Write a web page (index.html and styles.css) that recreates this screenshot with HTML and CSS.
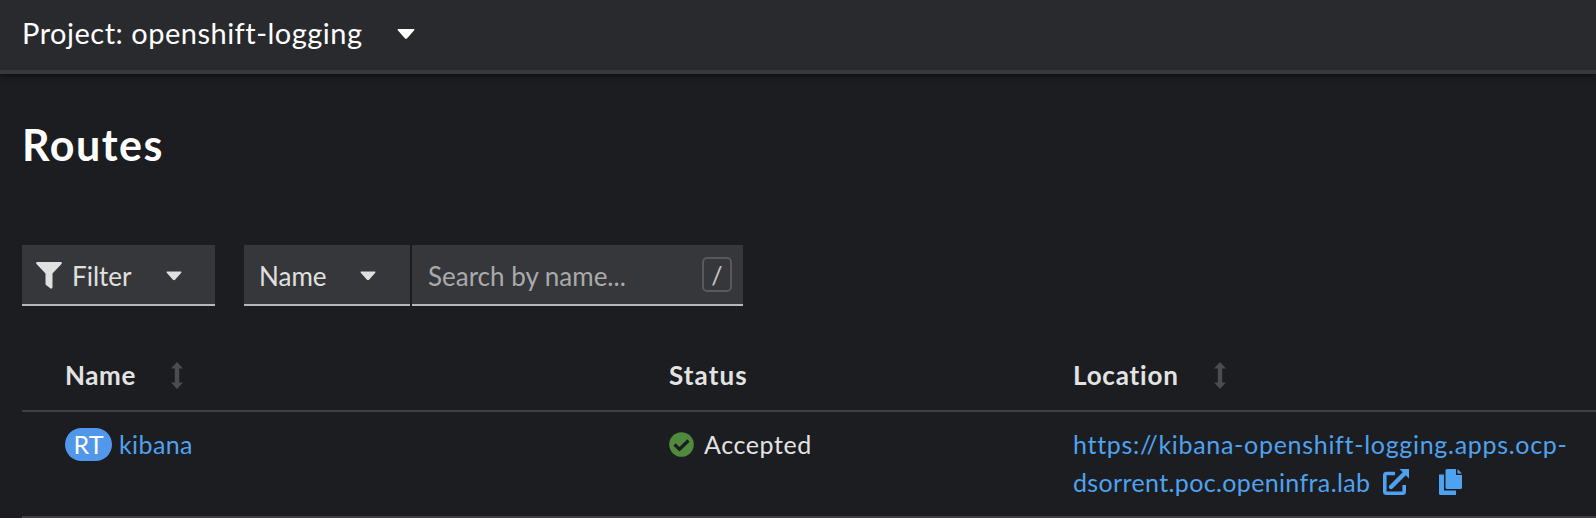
FILE: index.html
```html
<!DOCTYPE html>
<html lang="en">
<head>
<meta charset="utf-8">
<title>Routes</title>
<link rel="stylesheet" href="styles.css">
</head>
<body>
<header class="project-bar">
  <span class="project-name">Project: openshift-logging</span>
  <svg class="caret caret-lg" viewBox="0 0 18 10"><path d="M1.5 0h15q1.500 0 .7 1.300l-7 7.900q-1.200 1-2.400 0l-7-7.900q-.8-1.300.7-1.300z"/></svg>
</header>
<main class="page">
  <h1 class="title"><span>Routes</span></h1>
  <div class="toolbar">
    <button class="control filter">
      <svg class="funnel" viewBox="0 0 26 27"><path d="M1 0h24q1.500.8.500 2l-9 9.500v14q-.5 1.500-2 1l-4.500-3.500q-.5-.5-.5-1.500v-10l-9-9.500q-1-1.200.5-2z"/></svg>
      <span class="filter-text">Filter</span>
      <svg class="caret" viewBox="0 0 18 10"><path d="M1.500 0h15q1.500 0 .7 1.300l-7 7.900q-1.200 1-2.400 0l-7-7.900q-.8-1.300.7-1.300z"/></svg>
    </button>
    <button class="control kind">
      <span class="kind-text">Name</span>
      <svg class="caret" viewBox="0 0 18 10"><path d="M1.500 0h15q1.500 0 .7 1.300l-7 7.900q-1.200 1-2.400 0l-7-7.900q-.8-1.300.7-1.300z"/></svg>
    </button>
    <div class="control search">
      <span class="search-text">Search by name...</span>
      <kbd class="key">/</kbd>
    </div>
  </div>
  <div class="table">
    <div class="row head">
      <div class="cell"><span class="h-name">Name</span><svg class="sort" viewBox="0 0 12 27"><path d="M6 0l6 6.500h-3.800v14h3.800l-6 6.500-6-6.500h3.800v-14h-3.800z"/></svg></div>
      <div class="cell"><span class="h-status">Status</span></div>
      <div class="cell"><span class="h-location">Location</span><svg class="sort" viewBox="0 0 12 27"><path d="M6 0l6 6.500h-3.800v14h3.800l-6 6.500-6-6.500h3.800v-14h-3.800z"/></svg></div>
    </div>
    <div class="row body">
      <div class="cell"><span class="badge">RT</span><a class="link kibana">kibana</a></div>
      <div class="cell"><svg class="check" viewBox="0 0 25 25"><circle cx="12.500" cy="12.500" r="12.300"/><path d="M5.500 12.500l5 4.700 9-8.700"/></svg><span class="accepted">Accepted</span></div>
      <div class="cell location">
        <a class="link url1">https://kibana-openshift-logging.apps.ocp-</a>
        <div class="line2"><a class="link url2">dsorrent.poc.openinfra.lab</a>
          <svg class="external" viewBox="0 0 26 26"><path class="stroke" d="M12 4.500H3.500q-1.700 0-1.700 1.700v16.300q0 1.700 1.700 1.700H19.500q1.700 0 1.700-1.700V16"/><path class="arrow" d="M8 18L21 5"/><path class="solid" d="M16.500 0h9.500v9.500z"/></svg>
          <svg class="copy" viewBox="0 0 23 26"><path d="M0 5.500h5V21.500h12v4.500H1.500Q0 26 0 24.500z"/><path d="M6.500 1.500Q6.500 0 8 0h9v6h6v12.500q0 1.500-1.500 1.500H8q-1.500 0-1.500-1.500zM18.500 0L23 4.500h-4.500z"/></svg>
        </div>
      </div>
    </div>
  </div>
</main>
</body>
</html>
```
FILE: styles.css
```css
* { box-sizing: border-box; }
body {
  margin: 0;
  height: 518px;
  overflow: hidden;
  background: #1c1d20;
  color: #e3e3e3;
  font-family: Lato, "Open Sans", sans-serif;
  font-size: 25px;
  white-space: nowrap;
}
svg { display: block; flex: none; fill: currentColor; }
.project-bar {
  height: 74px;
  display: flex;
  align-items: center;
  padding: 0 0 2px 22px;
  background: #292a2d;
  border-bottom: 4px solid #37383a;
  box-shadow: 0 1px 6px #0b0b0d;
  color: #fff;
}
.project-name { width: 375px; padding-bottom: 3px; font-size: 29px; letter-spacing: .5px; }
.caret { width: 16px; height: 10px; }
.caret-lg { width: 18px; }
.page { padding: 47px 0 0 22px; }
.title {
  margin: 0;
  height: 48px;
  line-height: 48px;
  color: #fff;
  font-size: 43px;
  font-weight: 700;
  letter-spacing: 1.5px;
}
.toolbar { display: flex; height: 61px; margin-top: 76px; }
.control {
  height: 61px;
  display: flex;
  align-items: center;
  border: 0;
  border-bottom: 2px solid #b4b8b6;
  background: #36373a;
  color: #e0e0e0;
  font: inherit;
  font-size: 26px;
}
.filter { width: 193px; padding: 2px 0 0 14px; margin-right: 29px; }
.funnel { width: 26px; height: 27px; margin-right: 10px; }
.filter-text { width: 94px; text-align: left; }
.kind { width: 166px; padding: 2px 0 0 15px; margin-right: 2px; }
.kind-text { width: 101px; text-align: left; }
.search { width: 331px; padding: 0 11px 0 16px; justify-content: space-between; color: #a9aaac; }
.search-text { padding-top: 2px; }
.key {
  width: 30px;
  height: 35px;
  border: 2px solid #58595c;
  border-radius: 5px;
  font: 25px/32px Lato, sans-serif;
  text-align: center;
  color: #c4c4c6;
}
.table { margin-top: 34px; }
.row {
  display: grid;
  grid-template-columns: 604px 404px 1fr;
  padding-left: 43px;
  border-bottom: 2px solid #3f4043;
}
.head { height: 72px; font-size: 26px; font-weight: 700; }
.body { height: 106px; padding-top: 13px; }
.cell { display: flex; align-items: center; }
.body .cell { height: 38px; }
.sort { width: 12px; height: 27px; color: #4b4c50; }
.h-name { width: 106px; letter-spacing: .6px; }
.h-status { letter-spacing: 1.1px; }
.h-location { width: 141px; letter-spacing: .8px; }
.link { color: #4fa2ef; }
.kibana { letter-spacing: .4px; }
.badge {
  width: 47px;
  height: 33px;
  margin-right: 7px;
  border-radius: 17px;
  background: #5198ed;
  color: #fff;
  line-height: 33px;
  text-align: center;
}
.check { width: 25px; height: 25px; margin-right: 10px; fill: #4f8a3d; }
.check path { fill: none; stroke: #1c1d20; stroke-width: 3.200; }
.accepted { letter-spacing: .6px; }
.url1 { letter-spacing: .7px; }
.body .location { height: 76px; flex-direction: column; align-items: flex-start; line-height: 38px; }
.line2 { display: flex; align-items: center; height: 38px; color: #4fa2ef; }
.url2 { width: 310px; letter-spacing: .36px; }
.external { width: 26px; height: 26px; margin-right: 30px; }
.stroke { fill: none; stroke: currentColor; stroke-width: 3.600; }
.arrow { fill: none; stroke: currentColor; stroke-width: 4.400; stroke-linecap: round; }
.copy { width: 23px; height: 26px; }
```
